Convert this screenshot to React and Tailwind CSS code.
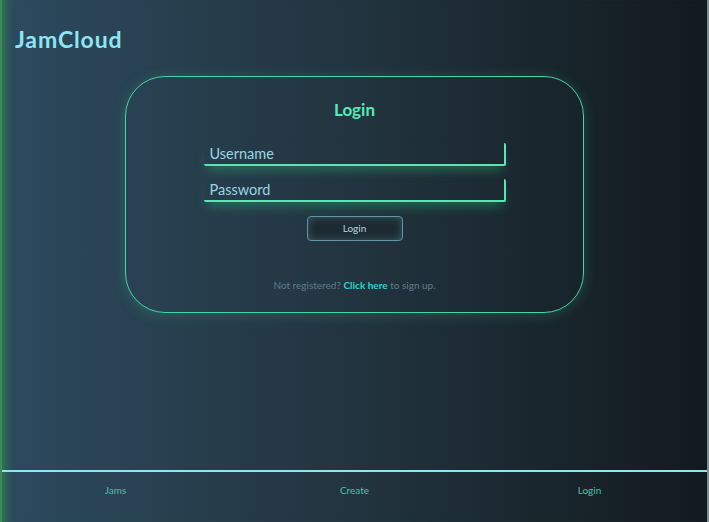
const App = () => {
    return (
        <div
            className="min-h-screen h-[522px] flex flex-col bg-gradient-to-r from-[#2d4a5f] via-[#22343f] to-[#121a1f] border-l-2 border-[#3f8a5a] border-r-2 border-r-[#7d8d94] shadow-[inset_12px_0_10px_-8px_#2f7a50]"
            style={{ fontFamily: 'Lato, "Open Sans", sans-serif' }}
        >
            <header className="pl-[13px] pt-[28px] h-[76px]">
                <h1 className="text-[23px] font-bold text-[#8ee6f5] leading-none tracking-[0.9px]">JamCloud</h1>
            </header>

            <main className="flex-1">
                <div className="ml-[123px] w-[459px] h-[237px] rounded-[40px] border border-[#45d6a6] shadow-[0_2px_14px_rgba(60,200,150,0.25)] flex flex-col items-center">
                    <h2 className="mt-[24px] text-[17px] font-bold text-[#55eab7] leading-none">Login</h2>

                    <div className="mt-[25px] flex flex-col gap-[13px]">
                        <input
                            placeholder="Username"
                            className="w-[302px] h-[23px] bg-transparent border-b-2 border-r-2 border-[#5ae6b2] rounded-[2px] px-[6px] text-[14.5px] text-[#9ad4e2] placeholder:text-[#9ad4e2] outline-none shadow-[0_8px_12px_-4px_rgba(40,180,120,0.45)]"
                        />
                        <input
                            placeholder="Password"
                            type="password"
                            className="w-[302px] h-[23px] bg-transparent border-b-2 border-r-2 border-[#5ae6b2] rounded-[2px] px-[6px] text-[14.5px] text-[#9ad4e2] placeholder:text-[#9ad4e2] outline-none shadow-[0_8px_12px_-4px_rgba(40,180,120,0.45)]"
                        />
                    </div>

                    <button className="mt-[14px] w-[96px] h-[25px] rounded-[4px] border border-[#5e97a6] bg-[#1d2a31] shadow-[inset_0_0_8px_rgba(120,180,200,0.35)] text-[10px] text-[#b6d6de]">
                        Login
                    </button>

                    <p className="mt-[37px] text-[10px] text-[#5d7d8c]">
                        Not registered? <span className="font-bold text-[#2fd3d3]">Click here</span> to sign up.
                    </p>
                </div>
            </main>

            <footer className="h-[52px] border-t-2 border-[#8ee6f5] grid grid-cols-3 text-[10px] text-[#44c4a6]">
                <a className="text-center pt-[11px] pr-[8px]">Jams</a>
                <a className="text-center pt-[11px]">Create</a>
                <a className="text-center pt-[11px]">Login</a>
            </footer>
        </div>
    );
};

export default App;
